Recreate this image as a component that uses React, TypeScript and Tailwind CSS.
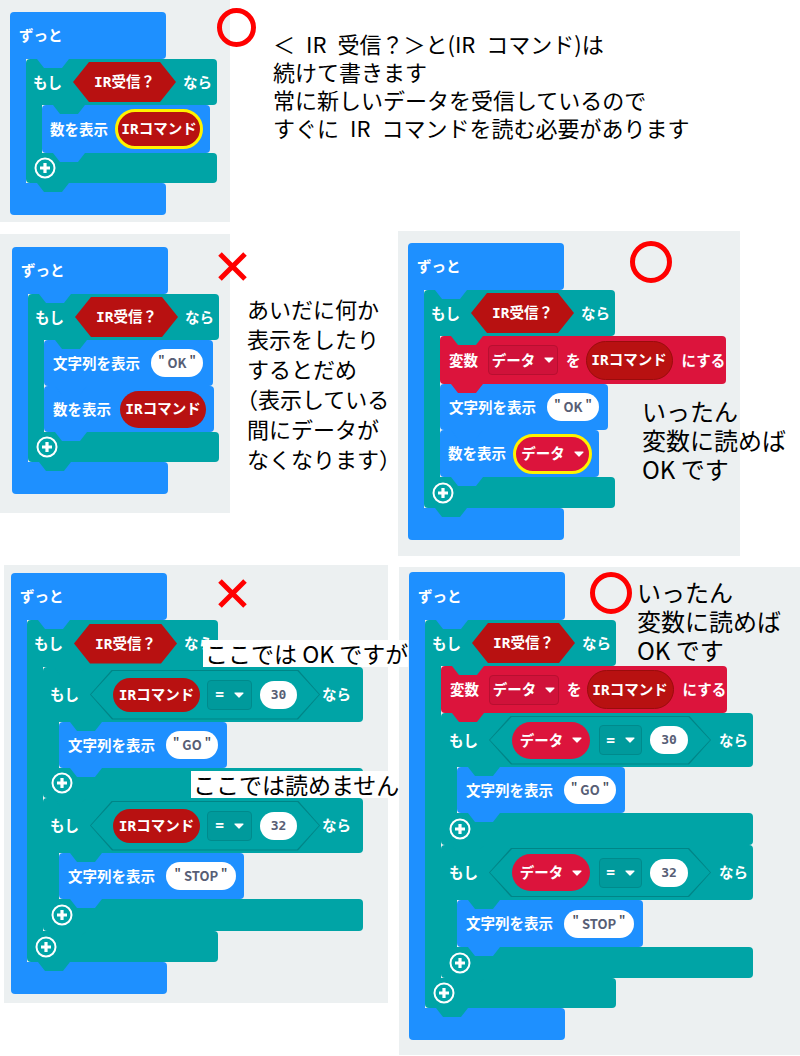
import type { ReactNode } from "react";

const BLUE = "bg-[#1e90ff]";
const TEAL = "bg-[#00a4a6]";
const RED = "bg-[#dc143c]";
const mono = "font-['DejaVu_Sans_Mono',monospace]";
const hex16 =
  "[clip-path:polygon(16px_0,calc(100%_-_16px)_0,100%_50%,calc(100%_-_16px)_100%,16px_100%,0_50%)]";
const hex22 =
  "[clip-path:polygon(22px_0,calc(100%_-_22px)_0,100%_50%,calc(100%_-_22px)_100%,22px_100%,0_50%)]";

function Tab({ color, className }: { color: string; className: string }) {
  return (
    <div
      className={`absolute top-full z-10 h-[9px] w-[32px] [clip-path:polygon(0_0,100%_0,78%_100%,22%_100%)] ${color} ${className}`}
    />
  );
}

function Label({ children, className = "" }: { children: ReactNode; className?: string }) {
  return (
    <span className={`shrink-0 whitespace-nowrap text-[14.5px] font-bold leading-none text-white ${className}`}>
      {children}
    </span>
  );
}

function Caret() {
  return (
    <svg width="10" height="6" viewBox="0 0 10 6" className="shrink-0">
      <path d="M1 1h8L5 5z" fill="white" stroke="white" strokeWidth="1.2" strokeLinejoin="round" />
    </svg>
  );
}

function PlusIcon() {
  return (
    <svg width="22" height="22" viewBox="0 0 22 22" className="shrink-0">
      <circle cx="11" cy="11" r="9.5" fill="none" stroke="white" strokeWidth="2" />
      <path d="M11 6v10M6 11h10" stroke="white" strokeWidth="3.2" />
    </svg>
  );
}

function Stmt({ color, className, children }: { color: string; className: string; children: ReactNode }) {
  return (
    <div className={`relative flex shrink-0 items-center rounded-[4px] ${color} ${className}`}>
      {children}
      <Tab color={color} className="left-[11px]" />
    </div>
  );
}

function CBlock({
  color,
  head,
  foot,
  header,
  children,
  plus = true,
}: {
  color: string;
  head: string;
  foot: string;
  header: ReactNode;
  children: ReactNode;
  plus?: boolean;
}) {
  return (
    <div className="flex shrink-0 flex-col">
      <div className={`relative flex items-center rounded-t-[4px] rounded-br-[4px] ${color} ${head}`}>
        {header}
        <Tab color={color} className="left-[27px]" />
      </div>
      <div className="flex">
        <div className={`w-4 shrink-0 ${color}`} />
        <div className="flex flex-col items-start">{children}</div>
      </div>
      <div className={`relative flex items-center rounded-b-[4px] rounded-tr-[4px] pl-2 ${color} ${foot}`}>
        {plus && <PlusIcon />}
        {plus && <Tab color={color} className="left-[11px]" />}
      </div>
    </div>
  );
}

function Forever({ head = "h-[47px]", children }: { head?: string; children: ReactNode }) {
  return (
    <CBlock
      color={BLUE}
      head={`w-[156px] pl-[9px] ${head}`}
      foot="w-[156px] h-[32px]"
      plus={false}
      header={<Label>ずっと</Label>}
    >
      {children}
    </CBlock>
  );
}

function IrHex() {
  return (
    <div className={`ml-[11px] flex h-10 w-[103px] shrink-0 items-center justify-center bg-[#b81111] ${hex16}`}>
      <Label>
        <span className={mono}>IR</span>受信？
      </Label>
    </div>
  );
}

function IfIr({ foot = "h-[30px]", head = "h-[46px]", children }: { foot?: string; head?: string; children: ReactNode }) {
  return (
    <CBlock
      color={TEAL}
      head={`w-[191px] pl-[7px] ${head}`}
      foot={`w-[191px] ${foot}`}
      header={
        <>
          <Label>もし</Label>
          <IrHex />
          <Label className="ml-[7px]">なら</Label>
        </>
      }
    >
      {children}
    </CBlock>
  );
}

function IrOval({ className }: { className: string }) {
  return (
    <div className={`flex shrink-0 items-center justify-center rounded-full bg-[#b81111] ${className}`}>
      <Label>
        <span className={mono}>IR</span>コマンド
      </Label>
    </div>
  );
}

function VarOval({ className }: { className: string }) {
  return (
    <div className={`flex shrink-0 items-center justify-center gap-[9px] rounded-full ${RED} ${className}`}>
      <Label>データ</Label>
      <Caret />
    </div>
  );
}

function StrOval({ text, className }: { text: string; className: string }) {
  return (
    <div
      className={`flex h-7 shrink-0 items-center justify-center rounded-full bg-white text-[13px] font-bold text-[#575e75] ${className}`}
    >
      <span className="-mt-2 mr-[3px] text-[11px] text-[#4a4f5c]">"</span>
      {text}
      <span className="-mt-2 ml-[3px] text-[11px] text-[#4a4f5c]">"</span>
    </div>
  );
}

function NumOval({ n, className }: { n: string; className: string }) {
  return (
    <div
      className={`flex h-7 shrink-0 items-center justify-center rounded-full bg-white text-[13px] font-bold text-[#575e75] ${mono} ${className}`}
    >
      {n}
    </div>
  );
}

function EqDrop({ className }: { className: string }) {
  return (
    <div
      className={`flex h-[30px] shrink-0 items-center justify-center gap-[10px] rounded-[4px] border border-[#008a8c] bg-[#009a9c] ${className}`}
    >
      <Label className={mono}>=</Label>
      <Caret />
    </div>
  );
}

function CmpHex({ className, children }: { className: string; children: ReactNode }) {
  return (
    <div className={`shrink-0 bg-[#008587] p-px ${hex22} ${className}`}>
      <div className={`flex h-full items-center bg-[#00a4a6] pl-[22px] ${hex22}`}>{children}</div>
    </div>
  );
}

function SetBlock({ className }: { className: string }) {
  return (
    <Stmt color={RED} className={`w-[286px] pl-[9px] ${className}`}>
      <Label>変数</Label>
      <div className="ml-[10px] flex h-[30px] w-[70px] shrink-0 items-center justify-center gap-[9px] rounded-[4px] border border-[#b80f30] bg-[#d0123a]">
        <Label>データ</Label>
        <Caret />
      </div>
      <Label className="ml-[8px]">を</Label>
      <IrOval className="ml-[5px] h-[39px] w-[87px] border border-[#9a0c0c]" />
      <Label className="ml-[9px]">にする</Label>
    </Stmt>
  );
}

function ShowStr({ text, className, oval }: { text: string; className: string; oval: string }) {
  return (
    <Stmt color={BLUE} className={`h-[46px] pl-[9px] ${className}`}>
      <Label>文字列を表示</Label>
      <StrOval text={text} className={`ml-[11px] ${oval}`} />
    </Stmt>
  );
}

function Panel({ className, children }: { className: string; children: ReactNode }) {
  return <div className={`shrink-0 bg-[#ecf0f1] ${className}`}>{children}</div>;
}

function Ring({ className }: { className: string }) {
  return <div className={`absolute z-20 rounded-full border-[5px] border-[#ff0000] ${className}`} />;
}

function Cross({ className }: { className: string }) {
  return (
    <svg width="31" height="31" viewBox="0 0 31 31" className={`absolute z-20 ${className}`}>
      <path d="M3 3L28 28M28 3L3 28" stroke="#ff0000" strokeWidth="5" />
    </svg>
  );
}

function IfCmp({
  head,
  foot,
  hex,
  nara,
  left,
  drop,
  num,
  n,
  children,
}: {
  head: string;
  foot: string;
  hex: string;
  nara: string;
  left: ReactNode;
  drop: string;
  num: string;
  n: string;
  children: ReactNode;
}) {
  return (
    <CBlock
      color={TEAL}
      head={head}
      foot={foot}
      header={
        <>
          <Label>もし</Label>
          <CmpHex className={hex}>
            {left}
            <EqDrop className={drop} />
            <NumOval n={n} className={num} />
          </CmpHex>
          <Label className={nara}>なら</Label>
        </>
      }
    >
      {children}
    </CBlock>
  );
}

export default function App() {
  const note = "font-['Noto_Sans_CJK_JP',sans-serif] text-black";
  return (
    <div className="relative h-[1056px] w-[800px] overflow-hidden bg-white font-['Noto_Sans_CJK_JP',sans-serif]">
      {/* row 1 */}
      <div className="flex h-[231px] items-start">
        <Panel className="h-[222px] w-[230px] pl-[10px] pt-[12px]">
          <Forever>
            <IfIr>
              <Stmt color={BLUE} className="h-[48px] w-[168px] pl-2">
                <Label>数を表示</Label>
                <IrOval className="ml-[7px] h-10 w-[88px] border-[3px] border-[#fff200]" />
              </Stmt>
            </IfIr>
          </Forever>
        </Panel>
        <div className={`ml-[43px] mt-[29px] whitespace-pre text-[22px] leading-[28px] ${note}`}>
          <p>＜{"\u2002"}IR{"\u2002"}受信？＞と(IR{"\u2002"}コマンド)は</p>
          <p>続けて書きます</p>
          <p>常に新しいデータを受信しているので</p>
          <p>すぐに{"\u2002"}IR{"\u2002"}コマンドを読む必要があります</p>
        </div>
      </div>

      {/* row 2 */}
      <div className="flex h-[334px] items-start">
        <Panel className="mt-[3px] h-[279px] w-[230px] pl-[12px] pt-[13px]">
          <Forever>
            <IfIr>
              <ShowStr text="OK" className="w-[169px]" oval="w-[52px]" />
              <Stmt color={BLUE} className="h-[46px] w-[170px] pl-[9px]">
                <Label>数を表示</Label>
                <IrOval className="ml-[9px] h-[37px] w-[86px]" />
              </Stmt>
            </IfIr>
          </Forever>
        </Panel>
        <div className={`ml-[17px] mt-[62px] w-[151px] whitespace-nowrap text-[22px] leading-[30px] ${note}`}>
          <p>あいだに何か</p>
          <p>表示をしたり</p>
          <p>するとだめ</p>
          <p className="-ml-[11px]">（表示している</p>
          <p>間にデータが</p>
          <p>なくなります）</p>
        </div>
        <Panel className="h-[325px] w-[342px] pl-[10px] pt-[12px]">
          <Forever>
            <IfIr foot="h-[31px]">
              <SetBlock className="h-[48px]" />
              <ShowStr text="OK" className="w-[168px]" oval="w-[52px]" />
              <Stmt color={BLUE} className="h-[47px] w-[159px] pl-2">
                <Label>数を表示</Label>
                <VarOval className="ml-[7px] h-10 w-[79px] border-[3px] border-[#fff200]" />
              </Stmt>
            </IfIr>
          </Forever>
        </Panel>
      </div>

      {/* row 3 */}
      <div className="flex items-start">
        <Panel className="ml-[4px] h-[438px] w-[384px] pl-[7px] pt-[8px]">
          <Forever>
            <IfIr head="h-[47px]" foot="h-[31px]">
              <IfCmp
                head="w-[320px] h-[55px] pl-[7px]"
                foot="w-[320px] h-[30px]"
                hex="ml-[11px] h-[50px] w-[230px]"
                nara="ml-[2px]"
                left={<IrOval className="h-[34px] w-[87px]" />}
                drop="ml-[7px] w-[45px]"
                num="ml-[8px] w-[37px]"
                n="30"
              >
                <ShowStr text="GO" className="w-[168px]" oval="w-[52px]" />
              </IfCmp>
              <IfCmp
                head="w-[320px] h-[55px] pl-[7px]"
                foot="w-[320px] h-[32px]"
                hex="ml-[11px] h-[50px] w-[230px]"
                nara="ml-[2px]"
                left={<IrOval className="h-[34px] w-[87px]" />}
                drop="ml-[7px] w-[45px]"
                num="ml-[8px] w-[37px]"
                n="32"
              >
                <ShowStr text="STOP" className="w-[185px]" oval="w-[70px]" />
              </IfCmp>
            </IfIr>
          </Forever>
        </Panel>
        <Panel className="ml-[11px] mt-[2px] h-[488px] w-[401px] pl-[10px] pt-[5px]">
          <Forever head="h-[48px]">
            <IfIr>
              <SetBlock className="h-[47px]" />
              <IfCmp
                head="w-[312px] h-[54px] pl-2"
                foot="w-[312px] h-[32px]"
                hex="ml-[11px] h-[49px] w-[222px]"
                nara="ml-[8px]"
                left={<VarOval className="h-[37px] w-[78px]" />}
                drop="ml-[9px] w-[43px]"
                num="ml-[8px] w-[38px]"
                n="30"
              >
                <ShowStr text="GO" className="w-[168px]" oval="w-[52px]" />
              </IfCmp>
              <IfCmp
                head="w-[312px] h-[55px] pl-2"
                foot="w-[312px] h-[31px]"
                hex="ml-[11px] h-[49px] w-[222px]"
                nara="ml-[8px]"
                left={<VarOval className="h-[37px] w-[78px]" />}
                drop="ml-[9px] w-[43px]"
                num="ml-[8px] w-[38px]"
                n="32"
              >
                <ShowStr text="STOP" className="h-[47px] w-[186px]" oval="w-[70px]" />
              </IfCmp>
            </IfIr>
          </Forever>
        </Panel>
      </div>

      {/* marks and notes laid over the screenshots */}
      <Ring className="left-[217px] top-[8px] size-[39px]" />
      <Cross className="left-[217px] top-[251px]" />
      <Ring className="left-[630px] top-[241px] size-[42px]" />
      <Cross className="left-[217px] top-[578px]" />
      <Ring className="left-[590px] top-[572px] size-[42px]" />

      <div className={`absolute left-[642px] top-[396px] text-[24px] leading-[29px] ${note}`}>
        <p>いったん</p>
        <p>変数に読めば</p>
        <p>OK です</p>
      </div>
      <div className={`absolute left-[637px] top-[577px] text-[24px] leading-[29px] ${note}`}>
        <p>いったん</p>
        <p>変数に読めば</p>
        <p>OK です</p>
      </div>
      <p className={`absolute left-[203px] top-[640px] z-20 whitespace-nowrap bg-white pl-[2px] text-[23px] leading-[27px] ${note}`}>
        ここでは OK ですが
      </p>
      <p className={`absolute left-[191px] top-[771px] z-20 whitespace-nowrap bg-white pl-[2px] text-[23px] leading-[27px] ${note}`}>
        ここでは読めません
      </p>
    </div>
  );
}
